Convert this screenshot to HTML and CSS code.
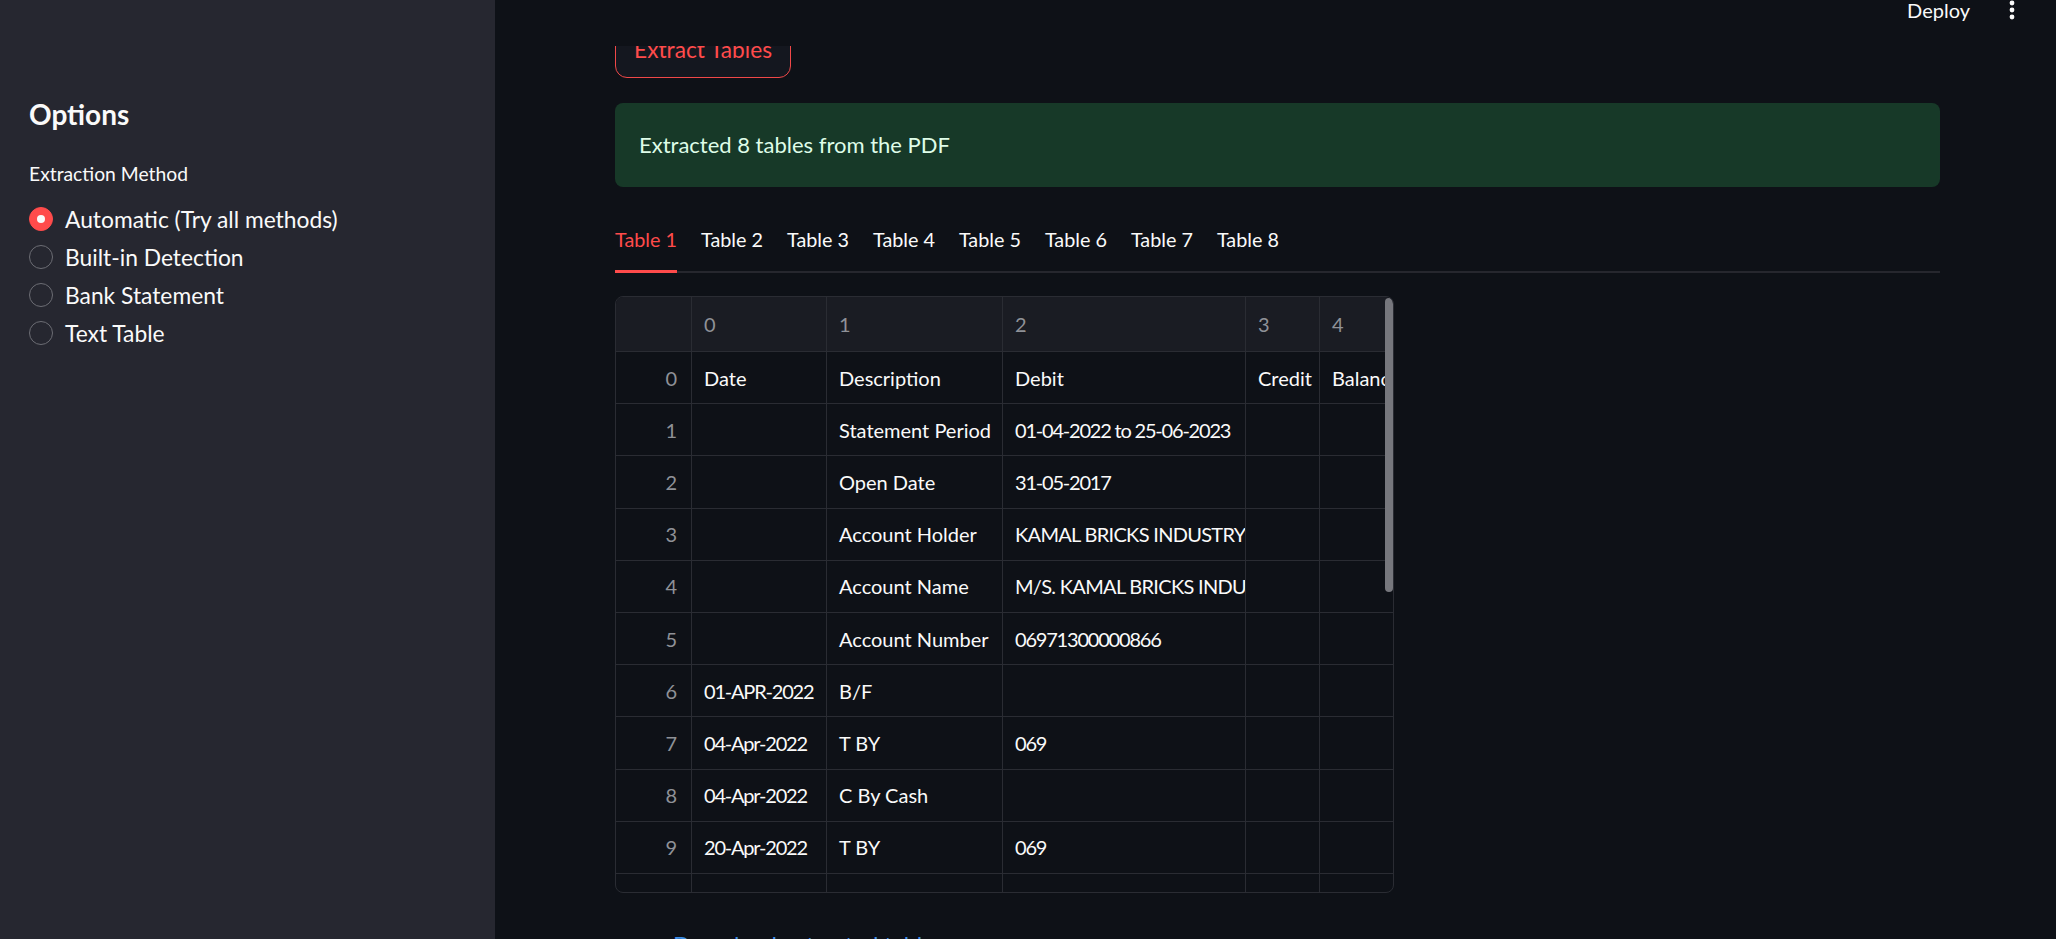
FILE: index.html
```html
<!DOCTYPE html>
<html lang="en">
<head>
<meta charset="utf-8">
<title>PDF Table Extractor</title>
<link rel="stylesheet" href="styles.css">
</head>
<body>
<div class="app">
  <aside class="sidebar">
    <h2 class="sb-title">Options</h2>
    <div class="sb-label">Extraction Method</div>
    <div class="radio-group">
      <div class="radio checked"><span class="dot"></span><span class="rlabel">Automatic (Try all methods)</span></div>
      <div class="radio"><span class="dot"></span><span class="rlabel">Built-in Detection</span></div>
      <div class="radio"><span class="dot"></span><span class="rlabel">Bank Statement</span></div>
      <div class="radio"><span class="dot"></span><span class="rlabel">Text Table</span></div>
    </div>
  </aside>
  <main class="main">
    <header class="topbar">
      <span class="deploy">Deploy</span>
      <svg class="kebab" width="6" height="22" viewBox="0 0 6 22"><circle cx="3" cy="3" r="2.4"/><circle cx="3" cy="10" r="2.4"/><circle cx="3" cy="17" r="2.4"/></svg>
    </header>
    <div class="content">
      <button class="btn">Extract Tables</button>
      <div class="alert">Extracted 8 tables from the PDF</div>
      <div class="tabs">
        <span class="tab active">Table 1</span>
        <span class="tab">Table 2</span>
        <span class="tab">Table 3</span>
        <span class="tab">Table 4</span>
        <span class="tab">Table 5</span>
        <span class="tab">Table 6</span>
        <span class="tab">Table 7</span>
        <span class="tab">Table 8</span>
      </div>
      <div class="grid-wrap">
        <div class="grid">
          <div class="c h"></div><div class="c h">0</div><div class="c h">1</div><div class="c h">2</div><div class="c h">3</div><div class="c h">4</div>
          <div class="c i">0</div><div class="c">Date</div><div class="c">Description</div><div class="c">Debit</div><div class="c">Credit</div><div class="c">Balance</div>
          <div class="c i">1</div><div class="c"></div><div class="c">Statement Period</div><div class="c n">01-04-2022 to 25-06-2023</div><div class="c"></div><div class="c"></div>
          <div class="c i">2</div><div class="c"></div><div class="c">Open Date</div><div class="c n">31-05-2017</div><div class="c"></div><div class="c"></div>
          <div class="c i">3</div><div class="c"></div><div class="c">Account Holder</div><div class="c u">KAMAL BRICKS INDUSTRY THROUGH ITS PROPRIETOR</div><div class="c"></div><div class="c"></div>
          <div class="c i">4</div><div class="c"></div><div class="c">Account Name</div><div class="c u">M/S. KAMAL BRICKS INDUSTRY</div><div class="c"></div><div class="c"></div>
          <div class="c i">5</div><div class="c"></div><div class="c">Account Number</div><div class="c n">06971300000866</div><div class="c"></div><div class="c"></div>
          <div class="c i">6</div><div class="c n">01-APR-2022</div><div class="c">B/F</div><div class="c"></div><div class="c"></div><div class="c"></div>
          <div class="c i">7</div><div class="c n">04-Apr-2022</div><div class="c">T BY</div><div class="c n">069</div><div class="c"></div><div class="c"></div>
          <div class="c i">8</div><div class="c n">04-Apr-2022</div><div class="c">C By Cash</div><div class="c"></div><div class="c"></div><div class="c"></div>
          <div class="c i">9</div><div class="c n">20-Apr-2022</div><div class="c">T BY</div><div class="c n">069</div><div class="c"></div><div class="c"></div>
          <div class="c i">10</div><div class="c n">25-Apr-2022</div><div class="c">C By Cash</div><div class="c"></div><div class="c"></div><div class="c"></div>
        </div>
        <div class="vscroll"></div>
      </div>
      <div class="next">Download extracted tables</div>
    </div>
  </main>
</div>
</body>
</html>
```
FILE: styles.css
```css
* { box-sizing: border-box; }
html, body { margin: 0; padding: 0; }
body {
  width: 2056px;
  height: 939px;
  overflow: hidden;
  background: #0e1117;
  color: #fafafa;
  font-family: "Source Sans Pro", Lato, "Noto Sans", sans-serif;
}
.app { display: flex; height: 939px; overflow: hidden; }

/* Sidebar */
.sidebar {
  flex: 0 0 495px;
  background: #262730;
  padding: 96px 0 0 29px;
}
.sb-title {
  margin: 0;
  font-size: 28px;
  line-height: 36px;
  font-weight: 700;
}
.sb-label {
  margin-top: 27px;
  font-size: 19.3px;
  line-height: 30px;
}
.radio-group { margin-top: 11px; display: flex; flex-direction: column; }
.radio {
  display: flex;
  align-items: center;
  height: 38px;
  font-size: 22.8px;
  line-height: 38px;
}
.dot {
  flex: none;
  width: 24px;
  height: 24px;
  border-radius: 50%;
  border: 1.5px solid #6c6d74;
  margin-right: 12px;
  display: flex;
  align-items: center;
  justify-content: center;
}
.radio.checked .dot { background: #ff4b4b; border-color: #ff4b4b; }
.radio.checked .dot::after {
  content: "";
  width: 8px;
  height: 8px;
  border-radius: 50%;
  background: #fafafa;
}

/* Main */
.main { flex: 1; position: relative; background: #0e1117; overflow: hidden; }
.topbar {
  position: absolute;
  top: 0; left: 0; right: 0;
  height: 46px;
  background: #0e1117;
  display: flex;
  justify-content: flex-end;
  align-items: flex-start;
  padding-right: 41px;
  z-index: 2;
}
.deploy {
  font-size: 20px;
  line-height: 24px;
  margin-top: -2px;
  margin-right: 39px;
}
.kebab { fill: #fafafa; }

.content { padding: 22px 116px 0 120px; }

.btn {
  display: block;
  width: 176px;
  height: 56px;
  border: 1px solid #f04848;
  border-radius: 12px;
  background: #14171f;
  color: #ff4b4b;
  font-family: inherit;
  font-size: 22.7px;
  line-height: 30px;
  padding: 0;
}

.alert {
  margin-top: 25px;
  height: 84px;
  border-radius: 8px;
  background: #173928;
  color: #dffde9;
  font-size: 22px;
  line-height: 30px;
  padding: 0 24px;
  display: flex;
  align-items: center;
}

.tabs {
  margin-top: 37px;
  display: flex;
  gap: 24px;
  border-bottom: 2px solid #26272e;
  position: relative;
}
.tab {
  position: relative;
  font-size: 19.8px;
  line-height: 30px;
  padding-bottom: 17px;
}
.tab.active { color: #ff4b4b; }
.tab.active::after {
  content: "";
  position: absolute;
  left: 0; right: 0; bottom: -2px;
  height: 3px;
  background: #ff4b4b;
}

.grid-wrap {
  position: relative;
  margin-top: 23px;
  width: 779px;
  height: 597px;
  border: 1px solid #2a2c33;
  border-radius: 8px;
  overflow: hidden;
}
.grid {
  display: grid;
  grid-template-columns: 76px 135px 176px 243px 74px 150px;
  grid-template-rows: 55px;
  grid-auto-rows: 52.2px;
  width: 854px;
}
.c {
  border-right: 1px solid #2a2c33;
  border-bottom: 1px solid #2a2c33;
  padding: 0 12px;
  font-size: 20px;
  white-space: nowrap;
  overflow: hidden;
  display: flex;
  align-items: center;
}
.c.n { letter-spacing: -1.2px; }
.c.u { letter-spacing: -0.7px; }
.c.h { background: #1a1c23; color: #8f9197; }
.c.i { justify-content: flex-end; color: #8f9197; padding-right: 14px; }
.vscroll {
  position: absolute;
  right: 0;
  top: 1px;
  width: 8px;
  height: 294px;
  border-radius: 4px;
  background: #76777d;
}

.next {
  margin-top: 37px;
  font-size: 23px;
  line-height: 30px;
  padding-left: 58px;
  color: #3d8ee8;
}
```
